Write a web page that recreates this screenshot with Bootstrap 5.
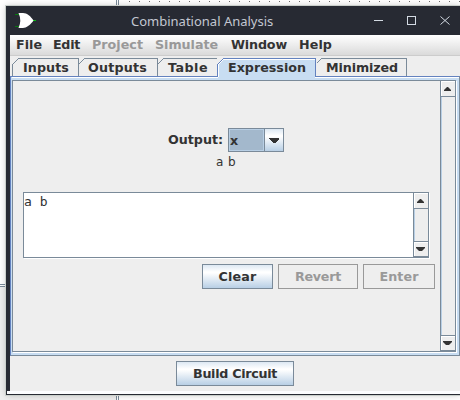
<!DOCTYPE html>
<html lang="en">
<head>
<meta charset="utf-8">
<title>Combinational Analysis</title>
<link href="https://cdn.jsdelivr.net/npm/bootstrap@5.3.0/dist/css/bootstrap.min.css" rel="stylesheet">
<style>
:root{--edge:#7a8a99;--focus:#6382bf;--pale:#c8ddf2;--face:#eee;--ink:#333}
html,body{width:460px;height:400px;overflow:hidden}
body{font:bold 12.7px/16px "DejaVu Sans",sans-serif;color:var(--ink);background:#fff}
svg{display:block;flex:none}
.desk{width:460px;height:400px;z-index:0}
.win{margin:6px 0 0 6px;width:454px;height:389px;background:#272a33;box-shadow:0 0 0 1px #c9cfcb,0 0 7px rgba(0,0,0,.22)}
.titlebar{height:29px;color:#c3c7d1}
.title-text{font:13px/18px "Noto Sans",sans-serif;padding-left:125px}
.gate{left:8px;top:6px}
.client{margin-left:4px;height:356px;background:var(--face)}
.menus{height:20px;background:linear-gradient(#fff,#dadada);padding-left:6px}
.menus span{line-height:19px;height:20px}
.off{color:#999}
.menuline{height:1px;background:#ccc}
.tabs{height:20px;padding:2px 0 0 2px}
.tab-item{height:18px;line-height:19px;position:relative;padding-left:10px}
.tab-item svg{position:absolute;left:0;top:0}
.tab-item span{position:relative;z-index:2}
.pane{height:280px;border:1px solid var(--edge);border-left-color:var(--focus);border-top-color:var(--focus);background:var(--pale);padding:0 0 2px 1px}
.pane-top{height:1px;background:#fff}
.inner{width:444px;height:272px;margin-top:2px;border:1px solid var(--edge);box-shadow:1px 1px 0 #fff;background:var(--face)}
.view{width:427px;height:270px;padding-left:10px}
.combo{width:56px;height:24px;border:1px solid var(--edge)}
.combo-val{width:35px;height:22px;background:#a3b8cc;border:1px solid #b8cfe5;line-height:21px}
.combo-arrow{width:19px;height:22px;border-left:1px solid var(--edge)}
.metal{background:linear-gradient(#dde8f3,#fff 30%,#fff 34%,#b8cfe5)}
.plain{font-weight:400;font-size:12px}
.editor{width:406px;height:66px;border:1px solid var(--edge);background:#fff;box-shadow:1px 1px 0 #fff}
.mono{font-family:"DejaVu Sans Mono",monospace;font-size:13px;line-height:17px}
.vbar{border-left:1px solid var(--edge);background:var(--face);box-shadow:inset 1px 0 #b8cfe5}
.arrow{height:16px;border-bottom:1px solid var(--edge);box-shadow:inset 1px 1px #fff}
.arrow.down{border-top:1px solid var(--edge)}
.push{border:1px solid var(--edge);border-radius:0;padding:0;height:25px;font:bold 12.7px/23px "DejaVu Sans",sans-serif;color:var(--ink);flex:none}
.push:disabled{color:#999;border-color:#999;background:var(--face);opacity:1}
.footer-area{height:35px}
.t{display:inline-block;white-space:pre}
</style>
<script src="https://cdn.jsdelivr.net/npm/bootstrap@5.3.0/dist/js/bootstrap.bundle.min.js"></script>
</head>
<body>
<svg class="desk position-absolute top-0 start-0" viewBox="0 0 460 400" shape-rendering="crispEdges">
<defs><pattern id="dots" x="129" y="1" width="10" height="10" patternUnits="userSpaceOnUse"><rect width="1" height="1" fill="#666"/></pattern></defs>
<rect width="460" height="400" fill="#fff"/>
<rect y="287" width="117" height="113" fill="#eee"/>
<path d="M0 284.5H117M0 286.5H117M116.5 0V400M118.5 0V400" stroke="#7a8a99"/>
<rect x="129" y="1" width="331" height="3" fill="url(#dots)"/>
</svg>
<div class="win position-relative">
<header class="titlebar d-flex align-items-center">
<svg class="gate position-absolute" width="24" height="18" viewBox="0 0 24 18"><path d="M1 2.5H5M1 14.5H5" stroke="#087a10"/><path d="M18 8.500H22" stroke="#00b90b"/><path d="M4.500 1H9C13 1 17 4.500 19.500 8.500C17 12.500 12 16 9 16H4.500Q8 8.500 4.500 1Z" fill="#fff"/></svg>
<div class="title-text"><span class="t">Combinational Analysis</span></div>
</header>
<svg class="position-absolute top-0 end-0" width="94" height="29" viewBox="0 0 94 29" fill="none" stroke="#d3dae3"><path d="M8 14.500H17"/><rect x="41.500" y="10.500" width="8" height="8"/><path d="M74.500 10.500L83.500 18.500M83.500 10.500L74.500 18.500"/></svg>
<main class="client">
<nav class="menus d-flex">
<span style="width:37px"><b class="t" data-w="26">File</b></span><span style="width:39px"><b class="t" data-w="27">Edit</b></span><span class="off" style="width:63px"><b class="t" data-w="51">Project</b></span><span class="off" style="width:76px"><b class="t" data-w="63">Simulate</b></span><span style="width:68px"><b class="t" data-w="56">Window</b></span><span><b class="t" data-w="33">Help</b></span>
</nav>
<div class="menuline"></div>
<div class="tabs d-flex">
<div class="tab-item" style="width:66px;padding-left:11px"><svg width="67" height="18" fill="none" stroke="#7a8a99" shape-rendering="crispEdges"><path d="M.5 18V6.500L6.500.5H66.500V18"/></svg><span class="t" data-w="46">Inputs</span></div>
<div class="tab-item" style="width:79px"><svg width="80" height="18" fill="none" stroke="#7a8a99" shape-rendering="crispEdges"><path d="M.5 6.500L6.500.5H79.500V18"/></svg><span class="t" data-w="59">Outputs</span></div>
<div class="tab-item" style="width:61px;padding-left:11px"><svg width="61" height="18" fill="none" stroke="#7a8a99" shape-rendering="crispEdges"><path d="M.5 6.500L6.500.5H60"/></svg><span class="t" data-w="40">Table</span></div>
<div class="tab-item" style="width:97px"><svg width="100" height="21" style="left:-1px;z-index:1" fill="none" shape-rendering="crispEdges"><path d="M1 21V6L7 0H98V21Z" fill="#c8ddf2"/><path d="M1.500 19V6.500L6.500 1.500H98" stroke="#fff"/><path d="M.5 18V6.500L6.500.5H98.500V18" stroke="#6382bf"/></svg><span class="t" data-w="78">Expression</span></div>
<div class="tab-item" style="width:92px;padding-left:11px"><svg width="92" height="18" fill="none" stroke="#7a8a99" shape-rendering="crispEdges"><path d="M1.500 5.500L6.500.5H91.500V18"/></svg><span class="t" data-w="72">Minimized</span></div>
</div>
<section class="pane">
<div class="pane-top"></div>
<div class="inner d-flex">
<div class="view">
<div class="d-flex align-items-center" style="padding:47px 0 0 145px"><div style="width:60px"><span class="t" data-w="55">Output:</span></div><div class="combo d-flex"><div class="combo-val">x</div><div class="combo-arrow metal d-flex align-items-center justify-content-center"><svg width="10" height="5" shape-rendering="crispEdges"><path d="M0 0H10V1L6 5H4L0 1Z" fill="#333"/></svg></div></div></div>
<div class="plain" style="padding:2px 0 0 193px"><span class="t" data-w="20">a b</span></div>
<div class="editor d-flex" style="margin-top:22px"><div class="plain mono flex-grow-1"><span class="t">a b</span></div>
<div class="vbar d-flex flex-column justify-content-between" style="width:15px"><div class="arrow d-flex align-items-center"><svg width="10" height="4" viewBox="-3 0 10 4"><path d="M3 0H4L7 3V4H0V3Z" fill="#333"/></svg></div><div class="arrow down d-flex align-items-center"><svg width="11" height="4" viewBox="-2 0 11 4"><path d="M0 0H9V1L6 4H3L0 1Z" fill="#333"/></svg></div></div></div>
<div class="d-flex" style="margin-top:6px;padding-left:179px;gap:5px"><button class="btn push metal" style="width:71px"><span class="t" data-w="38">Clear</span></button><button class="btn push" disabled style="width:80px"><span class="t" data-w="46">Revert</span></button><button class="btn push" disabled style="width:72px"><span class="t" data-w="39">Enter</span></button></div>
</div>
<div class="vbar d-flex flex-column justify-content-between flex-grow-1"><div class="arrow d-flex align-items-center justify-content-center"><svg width="9" height="4"><path d="M3 0H4L7 3V4H0V3Z" fill="#333"/></svg></div><div class="arrow down d-flex align-items-center justify-content-center"><svg width="11" height="4"><path d="M0 0H9V1L6 4H3L0 1Z" fill="#333"/></svg></div></div>
</div>
</section>
<footer class="footer-area" style="padding:5px 0 0 166px"><button class="btn push metal d-block" style="width:118px"><span class="t" data-w="84">Build Circuit</span></button></footer>
</main>
<div style="height:3px;margin-left:1px;background:#fcfdff"></div>
</div>
<script>
document.querySelectorAll('[data-w]').forEach(e=>{
  const d=+e.dataset.w-e.getBoundingClientRect().width;
  e.style.letterSpacing=d/e.textContent.length+'px';
});
</script>
</body>
</html>
